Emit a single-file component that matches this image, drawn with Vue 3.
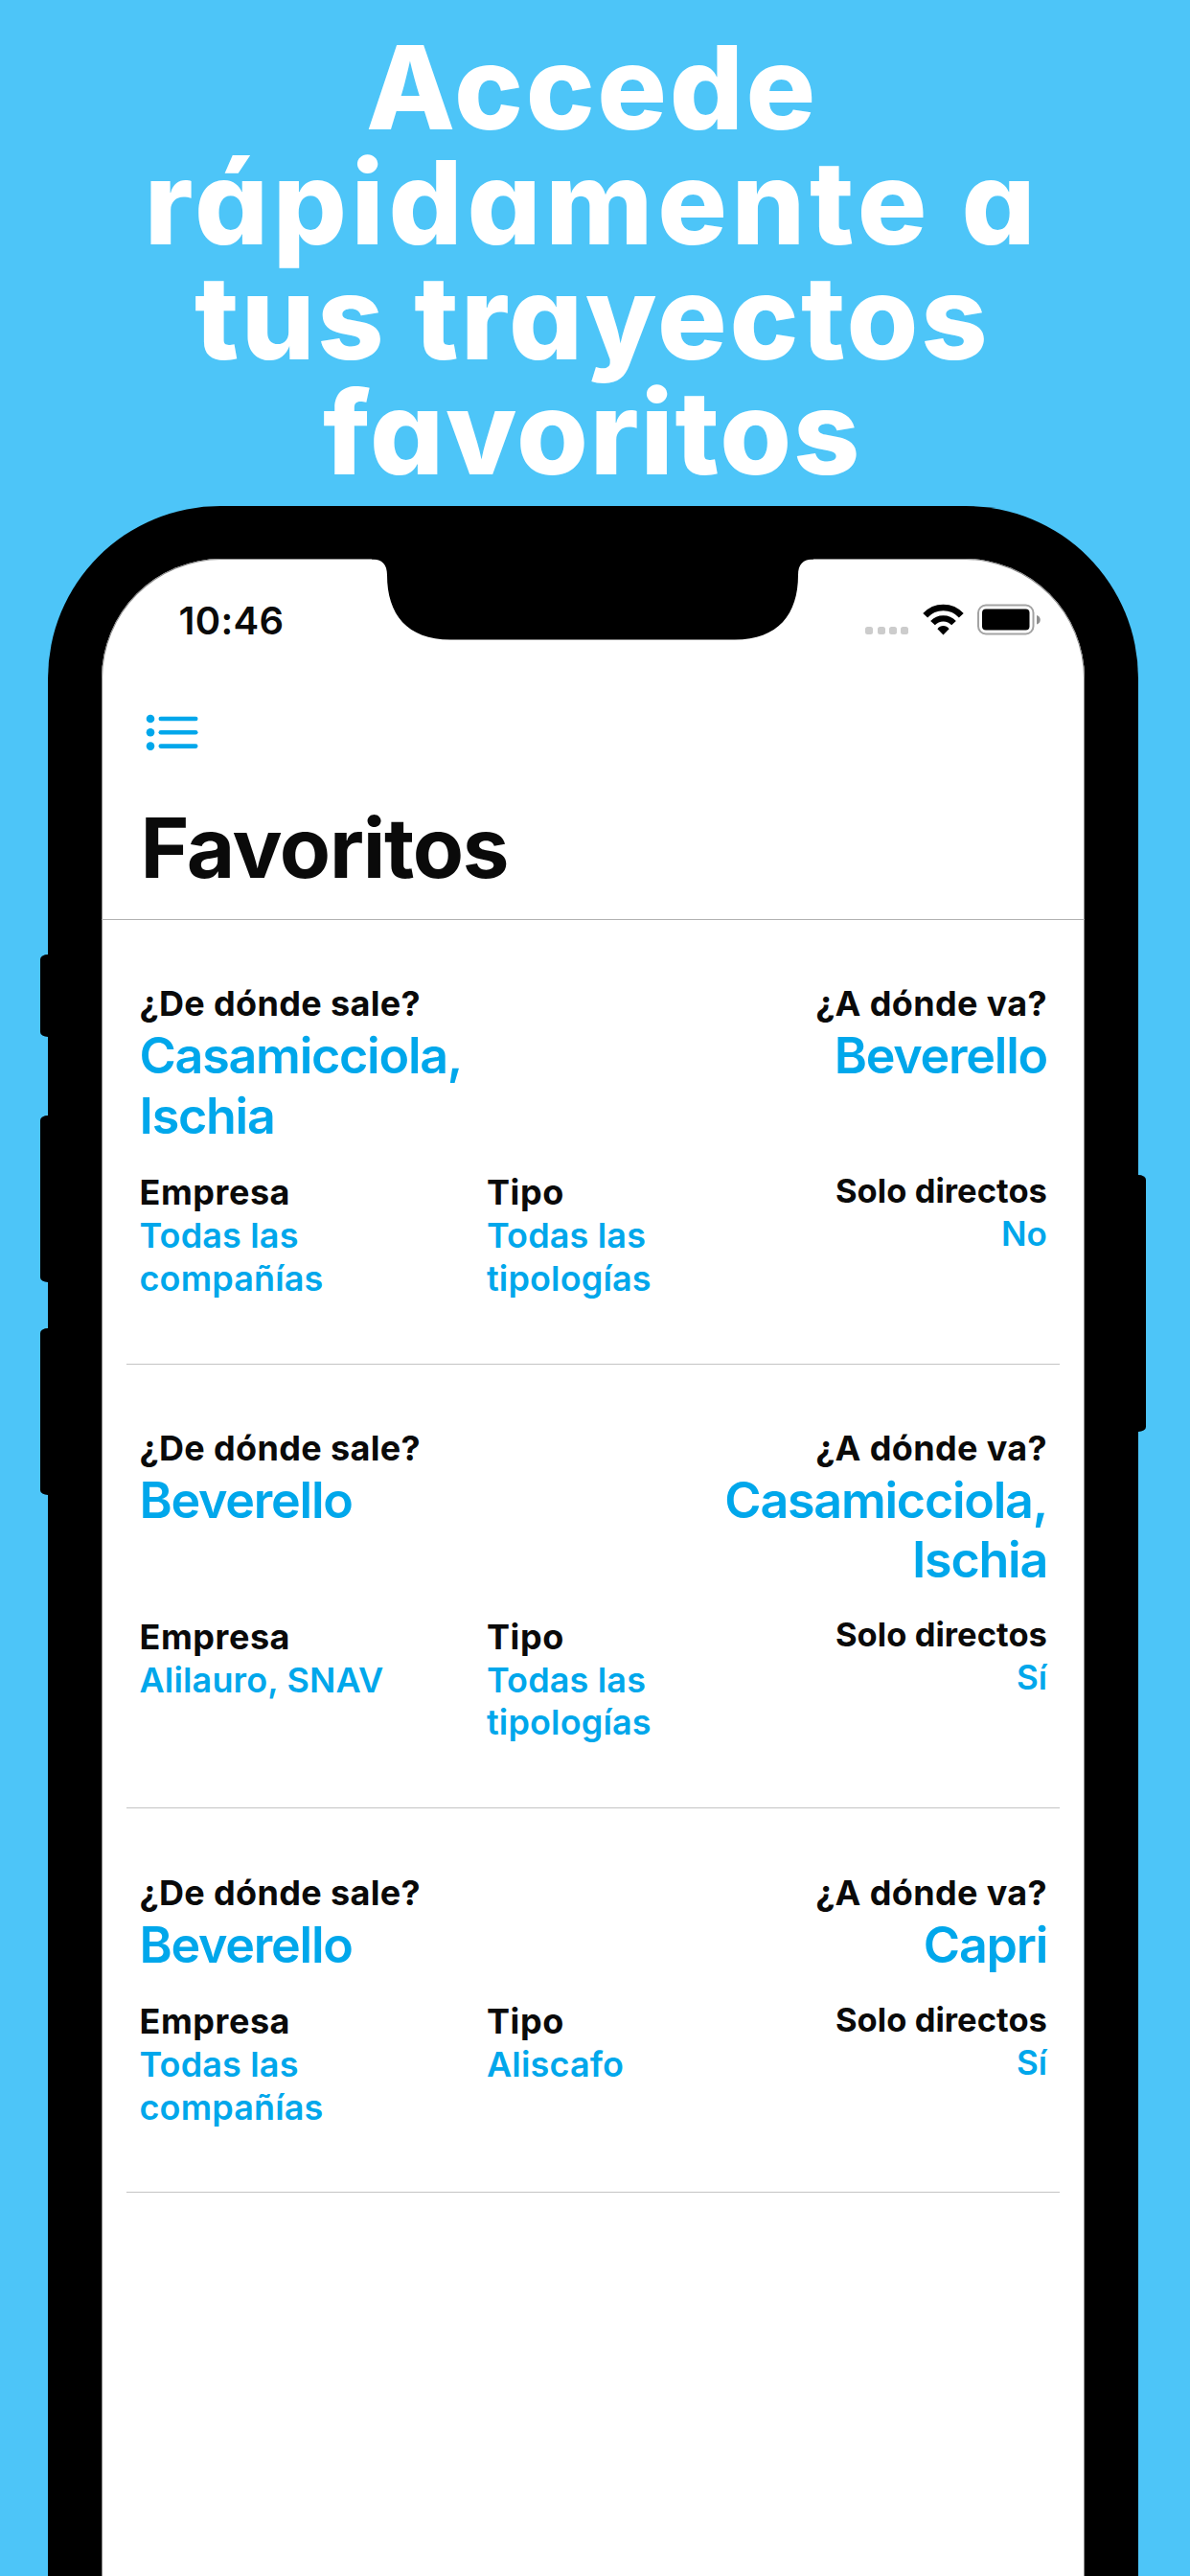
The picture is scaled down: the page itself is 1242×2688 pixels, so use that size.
<script setup>
const headline = ['Accede', 'rápidamente a', 'tus trayectos', 'favoritos']
const trips = [
  { from: 'Casamicciola, Ischia', to: 'Beverello', company: 'Todas las compañías', type: 'Todas las tipologías', direct: 'No' },
  { from: 'Beverello', to: 'Casamicciola, Ischia', company: 'Alilauro, SNAV', type: 'Todas las tipologías', direct: 'Sí' },
  { from: 'Beverello', to: 'Capri', company: 'Todas las compañías', type: 'Aliscafo', direct: 'Sí' },
]
const buttons = ['mute', 'volume-up', 'volume-down', 'power']
</script>

<template>
  <main class="poster">
    <h1 class="headline">
      <span v-for="(line, i) in headline" :key="i" :class="['line', 'line-' + (i + 1)]">{{ line }}</span>
    </h1>
    <section class="phone">
      <i v-for="b in buttons" :key="b" :class="['button', b]"></i>
      <div class="screen">
        <svg class="notch" width="461" height="85" viewBox="0 0 461 85"><path d="M0 0H461V0.500C450 0.500 445 6 445 17C445 58 424 84.500 379 84.500H82C37 84.500 16 58 16 17C16 6 11 0.500 0 0.500Z" /></svg>
        <header class="status">
          <span class="time">10:46</span>
          <div class="indicators">
            <span class="signal"><i v-for="n in 4" :key="n"></i></span>
            <svg class="wifi" width="43" height="33" viewBox="0 0 43 33">
              <g fill="none" stroke="#000">
                <path d="M2.700 12.200A25.500 25.500 0 0 1 40.300 12.200" stroke-width="6.600" />
                <path d="M10.500 20.200A15 15 0 0 1 32.500 20.200" stroke-width="6.300" />
              </g>
              <path d="M21.500 32.400L15.400 26.200C18.500 21.800 24.500 21.800 27.600 26.200Z" />
            </svg>
            <svg class="battery" width="67" height="33" viewBox="0 0 67 33">
              <rect x="1" y="1.500" width="57.500" height="30" rx="8" fill="none" stroke="#a3a3a3" stroke-width="2" />
              <rect x="5" y="5.500" width="49.500" height="22" rx="4" />
              <path d="M62 12C67 13 67 20.500 62 21.500Z" fill="#8e8e8e" />
            </svg>
          </div>
        </header>
        <nav class="toolbar">
          <svg width="56" height="40" viewBox="0 0 56 40" fill="#00a7eb">
            <g v-for="y in [6, 20.3, 34.6]" :key="y">
              <circle cx="5" :cy="y" r="4.300" />
              <rect x="13.500" :y="y - 2.3" width="41" height="4.600" rx="2.300" />
            </g>
          </svg>
        </nav>
        <h2 class="title">Favoritos</h2>
        <ul class="trips">
          <li v-for="(t, i) in trips" :key="i" class="trip">
            <div class="route">
              <div class="stop"><span class="label">¿De dónde sale?</span><span class="place">{{ t.from }}</span></div>
              <div class="stop end"><span class="label">¿A dónde va?</span><span class="place">{{ t.to }}</span></div>
            </div>
            <div class="details">
              <div class="detail"><span class="label">Empresa</span><span class="value">{{ t.company }}</span></div>
              <div class="detail"><span class="label">Tipo</span><span class="value">{{ t.type }}</span></div>
              <div class="detail direct"><span class="label">Solo directos</span><span class="value">{{ t.direct }}</span></div>
            </div>
          </li>
        </ul>
      </div>
    </section>
  </main>
</template>

<style>
body { margin: 0; background: #4dc5f8; }
</style>

<style scoped>
.poster { width: 1242px; height: 2688px; overflow: hidden; background: #4dc5f8; font-family: Inter, "Liberation Sans", sans-serif; box-sizing: border-box; padding-top: 31px; display: flex; flex-direction: column; }
.headline { margin: 0; height: 497px; width: 1236px; flex: none; display: flex; flex-direction: column; align-items: center; color: #fff; font-size: 121px; font-weight: 800; line-height: 120px; font-feature-settings: "cv11"; }
.line { white-space: nowrap; }
.line-1 { letter-spacing: 2.700px; }
.line-2 { letter-spacing: 4.700px; }
.line-3 { letter-spacing: 2.600px; }
.line-4 { letter-spacing: 1.700px; }
.phone { position: relative; flex: 1; box-sizing: border-box; width: 1137.500px; margin-left: 50px; padding: 55px 55.500px 0; background: #000; border-radius: 180px 180px 0 0; }
.button { position: absolute; left: -8px; width: 12px; background: #000; border-radius: 8px 0 0 8px / 5px 0 0 5px; }
.mute { top: 468px; height: 86px; }
.volume-up { top: 636px; height: 174px; }
.volume-down { top: 858px; height: 174px; }
.power { left: auto; right: -8.500px; top: 698px; height: 268px; border-radius: 0 8px 8px 0 / 0 5px 5px 0; }
.screen { position: relative; height: calc(100% + 4px); background: #fff; border-radius: 125px 125px 0 0; overflow: hidden; box-shadow: inset 0 0 0 1px #8a8a8a; }
.notch { position: absolute; left: 282.500px; top: -0.500px; }
.status { display: flex; justify-content: space-between; align-items: flex-start; height: 144px; padding: 0 45px 0 81px; }
.time { margin-top: 41px; font-size: 40px; line-height: 48px; font-weight: 600; letter-spacing: 0.300px; color: #0a0a0a; }
.indicators { display: flex; margin-top: 47px; height: 33px; align-items: flex-end; }
.signal { display: flex; gap: 4.200px; margin: 0 15px 1px 0; }
.signal i { width: 8px; height: 8px; border-radius: 2.500px; background: #ccc; }
.wifi { margin-right: 14px; }
.toolbar { height: 104px; padding: 17px 0 0 46.500px; box-sizing: border-box; }
.title { margin: 0; height: 129px; padding-left: 41px; font-size: 87px; line-height: 108px; font-weight: 700; letter-spacing: -1.300px; color: #0a0a0a; border-bottom: 1px solid #b2b2b2; box-sizing: border-box; }
.trips { list-style: none; margin: 0; padding: 0 26px; }
.trip { padding: 64.400px 13px 66px 14px; border-bottom: 1px solid #c4c4c4; color: #0a0a0a; }
.route { display: flex; justify-content: space-between; margin-bottom: 26.200px; }
.stop { display: flex; flex-direction: column; width: 400px; }
.label { font-size: 36px; line-height: 46px; font-weight: 700; letter-spacing: 0.350px; }
.place { margin-top: 1px; font-size: 52px; line-height: 62.300px; font-weight: 600; letter-spacing: -1.250px; color: #00a7eb; }
.end { text-align: right; }
.details { display: flex; }
.detail { display: flex; flex-direction: column; flex: none; width: 362.500px; }
.detail .label { line-height: 45px; letter-spacing: 0.550px; }
.value { max-width: 270px; font-size: 36px; line-height: 44.700px; font-weight: 600; letter-spacing: 0.150px; color: #00a7eb; }
.detail.direct { margin-top: -1.300px; width: auto; flex: 1; align-items: flex-end; white-space: nowrap; }
.direct .label, .direct .value { font-size: 34.500px; line-height: 44px; letter-spacing: 0.050px; }
.direct .value { font-size: 35px; }
</style>
